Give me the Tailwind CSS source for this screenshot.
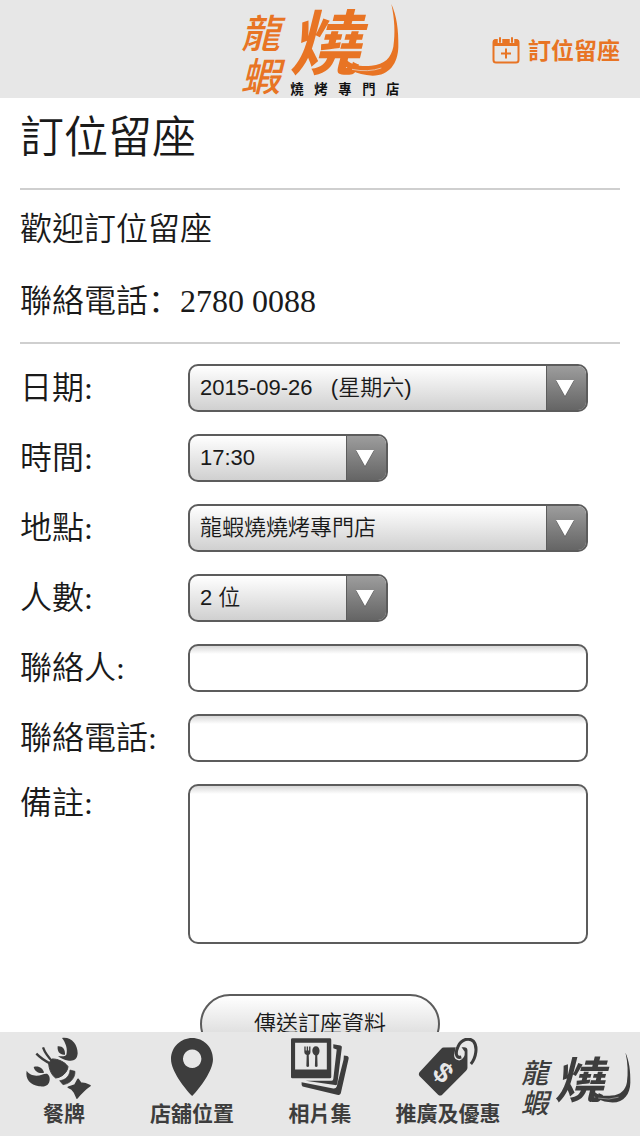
<!DOCTYPE html>
<html lang="zh-Hant">
<head>
    <meta charset="UTF-8">
    <meta name="viewport" content="width=device-width, initial-scale=1.0">
    <title>訂位留座</title>
    <script src="https://cdn.jsdelivr.net/npm/@tailwindcss/browser@4"></script>
</head>
<body class="flex flex-col h-screen bg-white text-[#1a1a1a] font-['Liberation_Sans','Noto_Sans_CJK_TC',sans-serif]">

    <!-- shared brand mark -->
    <svg class="hidden" aria-hidden="true">
        <symbol id="brand" viewBox="36 0 480 294">
            <g fill="currentColor" font-family="'Noto Sans CJK TC', sans-serif">
                <text x="38" y="144" font-size="118" font-weight="500" font-style="italic">龍</text>
                <text x="38" y="272" font-size="118" font-weight="500" font-style="italic">蝦</text>
                <text x="182" y="206" font-size="212" font-weight="700" font-style="italic">燒</text>
            </g>
            <path fill="currentColor" d="M338 184C348 202 384 226 434 227C484 226 510 190 511 140C512 92 506 46 490 12C500 56 502 100 496 140C490 172 470 194 430 197C400 200 372 196 356 180Z"/>
            <path d="M372 208Q420 218 460 204" fill="none" stroke="#e7e7e7" stroke-width="2"/>
        </symbol>
    </svg>

    <header class="grid grid-cols-[1fr_160px_1fr] items-center shrink-0 h-[98px] bg-[#e7e7e7]">
        <a href="#" aria-label="龍蝦燒" class="col-start-2">
            <svg class="w-[160px] h-[98px] text-[#e87424]" viewBox="36 0 480 294">
                <use href="#brand" x="36" y="0" width="480" height="294"/>
                <text x="187 259 331 403 474" y="281" fill="#111" font-size="40" font-weight="700" font-family="'Noto Sans CJK TC', sans-serif">燒烤專門店</text>
            </svg>
        </a>
        <a href="#booking" class="flex items-center justify-end gap-2 pt-1 pr-5 text-[23px] leading-8 font-bold text-[#e87424]">
            <svg class="w-7 h-7" viewBox="0 0 28 28" fill="none" stroke="currentColor">
                <rect x="1.5" y="3" width="25" height="22.5" rx="2.5" stroke-width="2"/>
                <path d="M1 9V4.500q0-2 2-2h22q2 0 2 2V9z" fill="currentColor" stroke="none"/>
                <path d="M8 0v6M20 0v6" stroke="#e7e7e7" stroke-width="4.500"/>
                <path d="M8 1v4M20 1v4" stroke-width="2" stroke-linecap="round"/>
                <path d="M14 11.500v10M9 16.500h10" stroke-width="2"/>
            </svg>
            <span>訂位留座</span>
        </a>
    </header>

    <main class="flex-1 min-h-0 overflow-y-auto [scrollbar-width:none] px-5 font-['Liberation_Serif','Noto_Sans_CJK_TC',serif] font-[350] text-[32px] leading-[38px]">
        <h1 class="pt-0.5 pb-2.5 text-[44px] leading-[78px]">訂位留座</h1>

        <section class="flex flex-col gap-[34px] pt-5 pb-[22px] border-y-2 border-[#cfcfcf]">
            <p>歡迎訂位留座</p>
            <p>聯絡電話<span lang="zh-Hans" class="font-['Noto_Sans_CJK_SC'] leading-none">：</span><span class="font-normal">2780 0088</span></p>
        </section>

        <form id="booking" class="flex flex-col gap-[22px] pt-5 pb-8">
            <div class="flex items-center">
                <label for="date" class="w-[168px] shrink-0">日期:</label>
                <div class="relative flex-1 max-w-[400px]">
                    <select id="date" class="block w-full h-12 pl-[10px] pr-12 appearance-none border-2 border-[#5c5c5c] rounded-[10px] bg-linear-to-b from-white to-[#d0d0d0] font-['Liberation_Sans','Noto_Sans_CJK_TC',sans-serif] text-[22px] leading-7">
                        <option>2015-09-26&nbsp;&nbsp;&nbsp;(星期六)</option>
                    </select>
                    <span class="absolute inset-y-[2px] right-[2px] w-10 pr-1 flex items-center justify-center rounded-r-lg border-l border-[#5c5c5c] bg-linear-to-b from-[#9d9d9d] to-[#656565] pointer-events-none">
                        <svg class="w-[18px] h-[17px]" viewBox="0 0 18 17"><path d="M0 1h18L9 17z" fill="#555"/><path d="M0 0h18L9 16z" fill="#fff"/></svg>
                    </span>
                </div>
            </div>

            <div class="flex items-center">
                <label for="time" class="w-[168px] shrink-0">時間:</label>
                <div class="relative flex-1 max-w-[200px]">
                    <select id="time" class="block w-full h-12 pl-[10px] pr-12 appearance-none border-2 border-[#5c5c5c] rounded-[10px] bg-linear-to-b from-white to-[#d0d0d0] font-['Liberation_Sans','Noto_Sans_CJK_TC',sans-serif] text-[22px] leading-7">
                        <option>17:30</option>
                    </select>
                    <span class="absolute inset-y-[2px] right-[2px] w-10 pr-1 flex items-center justify-center rounded-r-lg border-l border-[#5c5c5c] bg-linear-to-b from-[#9d9d9d] to-[#656565] pointer-events-none">
                        <svg class="w-[18px] h-[17px]" viewBox="0 0 18 17"><path d="M0 1h18L9 17z" fill="#555"/><path d="M0 0h18L9 16z" fill="#fff"/></svg>
                    </span>
                </div>
            </div>

            <div class="flex items-center">
                <label for="place" class="w-[168px] shrink-0">地點:</label>
                <div class="relative flex-1 max-w-[400px]">
                    <select id="place" class="block w-full h-12 pl-[10px] pr-12 appearance-none border-2 border-[#5c5c5c] rounded-[10px] bg-linear-to-b from-white to-[#d0d0d0] font-['Liberation_Sans','Noto_Sans_CJK_TC',sans-serif] text-[22px] leading-7">
                        <option>龍蝦燒燒烤專門店</option>
                    </select>
                    <span class="absolute inset-y-[2px] right-[2px] w-10 pr-1 flex items-center justify-center rounded-r-lg border-l border-[#5c5c5c] bg-linear-to-b from-[#9d9d9d] to-[#656565] pointer-events-none">
                        <svg class="w-[18px] h-[17px]" viewBox="0 0 18 17"><path d="M0 1h18L9 17z" fill="#555"/><path d="M0 0h18L9 16z" fill="#fff"/></svg>
                    </span>
                </div>
            </div>

            <div class="flex items-center">
                <label for="people" class="w-[168px] shrink-0">人數:</label>
                <div class="relative flex-1 max-w-[200px]">
                    <select id="people" class="block w-full h-12 pl-[10px] pr-12 appearance-none border-2 border-[#5c5c5c] rounded-[10px] bg-linear-to-b from-white to-[#d0d0d0] font-['Liberation_Sans','Noto_Sans_CJK_TC',sans-serif] text-[22px] leading-7">
                        <option>2 位</option>
                    </select>
                    <span class="absolute inset-y-[2px] right-[2px] w-10 pr-1 flex items-center justify-center rounded-r-lg border-l border-[#5c5c5c] bg-linear-to-b from-[#9d9d9d] to-[#656565] pointer-events-none">
                        <svg class="w-[18px] h-[17px]" viewBox="0 0 18 17"><path d="M0 1h18L9 17z" fill="#555"/><path d="M0 0h18L9 16z" fill="#fff"/></svg>
                    </span>
                </div>
            </div>

            <div class="flex items-center">
                <label for="contact" class="w-[168px] shrink-0">聯絡人:</label>
                <input type="text" id="contact" class="flex-1 min-w-0 max-w-[400px] h-12 px-[10px] border-2 border-[#5c5c5c] rounded-[10px] bg-linear-to-b from-[#d8d8d8] to-white to-[8px] text-[22px]">
            </div>

            <div class="flex items-center">
                <label for="phone" class="w-[168px] shrink-0">聯絡電話:</label>
                <input type="tel" id="phone" class="flex-1 min-w-0 max-w-[400px] h-12 px-[10px] border-2 border-[#5c5c5c] rounded-[10px] bg-linear-to-b from-[#d8d8d8] to-white to-[8px] text-[22px]">
            </div>

            <div class="flex items-start">
                <label for="remark" class="w-[168px] shrink-0">備註:</label>
                <textarea id="remark" class="flex-1 min-w-0 max-w-[400px] h-40 p-[10px] resize-none border-2 border-[#5c5c5c] rounded-[10px] bg-linear-to-b from-[#d8d8d8] to-white to-[8px] text-[22px]"></textarea>
            </div>

            <button type="submit" class="self-center w-60 h-[60px] mt-7 border-2 border-[#5c5c5c] rounded-full bg-linear-to-b from-white to-[#d0d0d0] font-['Liberation_Sans','Noto_Sans_CJK_TC',sans-serif] text-[22px] leading-7">傳送訂座資料</button>
        </form>
    </main>

    <nav class="grid grid-cols-5 shrink-0 h-[104px] bg-[#e7e7e7] text-[21px] leading-7 font-bold text-[#3d3d3d]">
        <a href="#" class="flex flex-col items-center pt-1.5 gap-1 whitespace-nowrap">
            <!-- lobster -->
            <svg class="w-[76px] h-[58px] overflow-visible" viewBox="15 12 228 174" fill="currentColor">
                <path d="M123 12C152 8 170 32 170 58C169 76 158 82 144 80C128 78 118 72 111 66C122 67 132 68 136 62C141 46 134 26 123 12Z"/>
                <path d="M110 37C124 35 133 46 132 62C118 64 108 54 110 37Z"/>
                <path d="M17 110C24 121 34 124 46 125C60 125 68 118 78 119C87 124 88 136 84 146C78 158 66 158 54 157C28 152 12 136 17 110Z"/>
                <path d="M38 99C52 94 66 102 69 116C56 120 42 115 38 99Z"/>
                <path d="M46 59Q62 76 90 90M66 40Q74 62 96 84" fill="none" stroke="currentColor" stroke-width="7"/>
                <path d="M83 88L93 75C110 74 132 84 141 98C139 116 122 130 104 132C92 124 84 106 83 88Z" stroke="currentColor" stroke-width="3" stroke-linejoin="round"/>
                <path d="M147 108L162 112C163 133 146 150 126 152L116 140C134 138 146 126 147 108Z" stroke="currentColor" stroke-width="2"/>
                <path d="M171 136L179 147Q194 147 207 155Q188 168 168 192L161 176Q154 164 142 160L162 153Z" stroke="currentColor" stroke-width="5" stroke-linejoin="round"/>
            </svg>
            <span>餐牌</span>
        </a>
        <a href="#" class="flex flex-col items-center pt-1.5 gap-1 whitespace-nowrap">
            <!-- map pin -->
            <svg class="w-16 h-[58px]" viewBox="95 26 123 170" fill="currentColor">
                <path fill-rule="evenodd" d="M157 26C190 26 218 52 218 88C218 122 180 172 157 196C134 172 95 122 95 88C95 52 124 26 157 26ZM157 60a27 27 0 1 0 .1 0Z"/>
            </svg>
            <span>店舖位置</span>
        </a>
        <a href="#" class="flex flex-col items-center pt-1.5 gap-1 whitespace-nowrap">
            <!-- photo stack -->
            <svg class="w-16 h-[58px]" viewBox="62 26 172 170" fill="currentColor">
                <path fill-rule="evenodd" d="M67 27H177q4 0 4 4V140q0 4-4 4H67q-4 0-4-4V31q0-4 4-4ZM75 40V118H168V40Z"/>
                <path d="M187 44L208 48Q213 49 212 54L199 159Q198 165 192 164L106 151L182 151Q187 151 187 146L197 60L187 56Z"/>
                <path d="M218 77L228 79Q233 81 232 86L209 188Q207 194 201 193L97 168Q93 166 94 156L187 174Q195 175 197 168L217 90Z"/>
                <path d="M102 51h4v12h3V51h4v12h3V51h4V68q0 6-5 8l1 33q-4 4-8 0l1-33q-7-2-7-8Z"/>
                <path d="M136 50c13 0 14 22 4 27l1 32q-4 4-8 0l1-32c-12-5-11-27 2-27Z"/>
            </svg>
            <span>相片集</span>
        </a>
        <a href="#" class="flex flex-col items-center pt-1.5 gap-1 whitespace-nowrap">
            <!-- price tag -->
            <svg class="w-16 h-[58px]" viewBox="103 26 172 170" fill="currentColor">
                <path d="M176 54L236 53Q246 53 246 62V114Q246 118 242 122L172 192Q166 197 160 192L106 138Q101 132 106 126L170 57Q172 54 176 54Z"/>
                <path d="M212 52H228L238 66Q240 86 222 92Q206 90 207 76Z" fill="#e7e7e7"/>
                <path d="M228 82C212 86 210 70 218 52C228 28 252 24 264 36C276 50 272 84 256 102" fill="none" stroke="currentColor" stroke-width="9"/>
                <text x="175" y="155" transform="rotate(45 175 127)" text-anchor="middle" font-family="'Liberation Sans', sans-serif" font-size="82" font-weight="700" fill="#e7e7e7">$</text>
            </svg>
            <span>推廣及優惠</span>
        </a>
        <a href="#" aria-label="龍蝦燒" class="flex items-center justify-center">
            <svg class="w-28 h-[68px]" viewBox="36 0 480 294"><use href="#brand" x="36" y="0" width="480" height="294"/></svg>
        </a>
    </nav>

</body>
</html>
